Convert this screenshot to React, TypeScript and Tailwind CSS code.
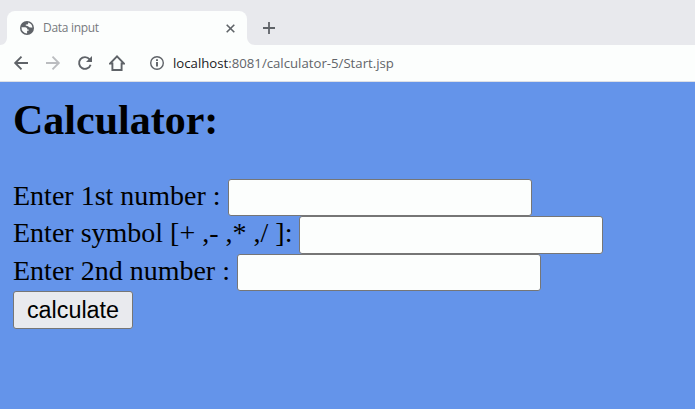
import React from "react";

const fields = [
  { label: "Enter 1st number :", row: "h-[37px]", text: "w-[215px]" },
  { label: "Enter symbol [+ ,- ,* ,/ ]:", row: "h-[38px]", text: "w-[286px]" },
  { label: "Enter 2nd number :", row: "h-[37px]", text: "w-[224px]" },
];

function TabStrip() {
  return (
    <div className="flex h-[45px] items-end bg-[#e8e9ed]">
      <svg className="h-2 w-[7px] shrink-0" viewBox="0 0 7 8" fill="#fcfefd">
        <path d="M7 0v8H0c4.500 0 7-3.500 7-8Z" />
      </svg>
      <div className="flex h-[34px] w-[240px] shrink-0 items-center rounded-t-lg bg-[#fcfefd] pl-[13px]">
        <svg className="size-[14px] shrink-0" viewBox="0 0 14 14">
          <circle cx="7" cy="7" r="7" fill="#5f6368" />
          <path d="M1.500 6.300h3.600c1.600 0 2.200 1 2.200 2.100h1.300v1.300H7.100v2.800A5.700 5.700 0 0 1 1.500 6.300Z" fill="#fcfefd" />
          <path d="M8.200 1.500v.8c0 .9-.6 1.300-1.500 1.300H5.800v1.200c1.200 0 2 .1 2.600.8.500.6 1.100.8 2 .8h1.100c.5 0 .7.400.7 1v.4A5.700 5.700 0 0 0 8.200 1.500Z" fill="#fcfefd" />
        </svg>
        <span className="ml-[9px] w-[183px] text-[12px] leading-4 tracking-[-0.3px] text-[#777a7e]">Data input</span>
        <svg className="size-[9px] shrink-0" viewBox="0 0 9 9" fill="none" stroke="#5f6368" strokeWidth="1.600">
          <path d="m.7.7 7.600 7.600M8.300.7.7 8.300" />
        </svg>
      </div>
      <svg className="h-2 w-2 shrink-0" viewBox="0 0 8 8" fill="#fcfefd">
        <path d="M0 0v8h8C3.500 8 0 4.500 0 0Z" />
      </svg>
      <svg className="mb-[11px] ml-2 size-3" viewBox="0 0 12 12" fill="none" stroke="#5f6368" strokeWidth="1.800">
        <path d="M6 0v12M0 6h12" />
      </svg>
    </div>
  );
}

function Toolbar() {
  return (
    <div className="flex h-[37px] items-center border-b border-[#dddfe5] bg-[#fcfefd] pl-[13px]">
      <svg className="size-4" viewBox="0 0 16 16" fill="none" stroke="#5f6368" strokeWidth="1.900">
        <path d="M15 8H2.500M8.500 1.700 2.200 8l6.300 6.300" />
      </svg>
      <svg className="ml-4 size-4" viewBox="0 0 16 16" fill="none" stroke="#bbbdc0" strokeWidth="1.900">
        <path d="M1 8h12.500M7.500 1.700 13.800 8l-6.300 6.300" />
      </svg>
      <svg className="ml-4 size-4" viewBox="0 0 16 16">
        <path d="M12.600 4.300A5.900 5.900 0 1 0 13.600 9.800" fill="none" stroke="#5f6368" strokeWidth="1.900" />
        <path d="M15 1v6H9Z" fill="#5f6368" />
      </svg>
      <svg className="ml-4 size-4" viewBox="0 0 16 16" fill="none" stroke="#5f6368" strokeWidth="1.900">
        <path d="M1 8.500h2.400V15h9.200V8.500H15L8 1.400 1 8.500Z" />
      </svg>
      <svg className="ml-[25px] size-[14px]" viewBox="0 0 14 14" fill="none" stroke="#5f6368">
        <circle cx="7" cy="7" r="6.300" strokeWidth="1.400" />
        <path d="M7 6v4.500M7 3.300v1.700" strokeWidth="1.900" />
      </svg>
      <div className="ml-[9px] w-[222px] whitespace-nowrap text-[13.2px] leading-5 text-[#626569]">
        <span className="text-[#202124]">localhost</span>:8081/calculator-5/Start.jsp
      </div>
    </div>
  );
}

export default function App() {
  return (
    <div className="flex h-[409px] w-[695px] flex-col overflow-hidden bg-[#6494ea] font-['Open_Sans',sans-serif]">
      <TabStrip />
      <Toolbar />
      <main className="flex flex-1 flex-col items-start pl-[13px] pt-[14px] font-['Liberation_Serif',serif] text-black">
        <h2 className="mb-[35px] text-[42px] font-bold leading-[48px]">Calculator:</h2>
        {fields.map((field) => (
          <label key={field.label} className={`flex ${field.row}`}>
            <span className={`shrink-0 whitespace-nowrap text-[28px] leading-[33px] ${field.text}`}>{field.label}</span>
            <input type="text" className="h-full w-[304px] rounded-[3px] border border-[#767676] bg-[#fcfefd] px-1 text-[23.33px] outline-none" />
          </label>
        ))}
        <button className="h-[38px] w-[120px] rounded-[3px] border border-[#767676] bg-[#e9eaee] font-['Liberation_Sans',sans-serif] text-[23.33px] leading-[36px]">
          calculate
        </button>
      </main>
    </div>
  );
}
